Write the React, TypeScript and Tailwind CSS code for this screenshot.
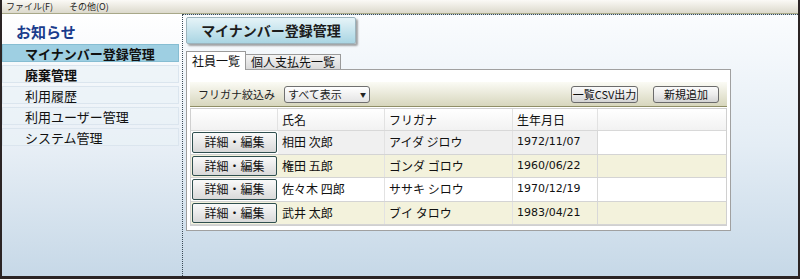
import React from 'react';

const jp = "font-['Noto_Sans_CJK_JP',sans-serif]";

const menuItems = [
  { label: 'マイナンバー登録管理', active: true, bold: true },
  { label: '廃棄管理', bold: true },
  { label: '利用履歴' },
  { label: '利用ユーザー管理' },
  { label: 'システム管理' },
];

const rows = [
  { name: '相田 次郎', kana: 'アイダ ジロウ', birth: '1972/11/07' },
  { name: '権田 五郎', kana: 'ゴンダ ゴロウ', birth: '1960/06/22' },
  { name: '佐々木 四郎', kana: 'ササキ シロウ', birth: '1970/12/19' },
  { name: '武井 太郎', kana: 'ブイ タロウ', birth: '1983/04/21' },
];

function SmallButton({ children, className = '' }: { children: React.ReactNode; className?: string }) {
  return (
    <button
      className={`h-[17px] rounded-[3px] border border-[#6b6b6b] bg-gradient-to-b from-[#fbfbfb] via-[#ececec] to-[#d4d4d4] text-[11px] leading-[15px] text-[#111] ${className}`}
    >
      {children}
    </button>
  );
}

export default function App() {
  return (
    <div className={`w-[800px] h-[279px] flex flex-col overflow-hidden bg-[#2b2424] px-[2px] pb-[3px] ${jp}`}>
      {/* menu bar */}
      <div className="h-[14px] shrink-0 flex items-center gap-[16px] px-[4px] bg-gradient-to-b from-[#fbfaf6] to-[#dcd9cc] border-b border-[#a8a888] text-[9px] leading-none text-[#222]">
        <span>ファイル(F)</span>
        <span>その他(O)</span>
      </div>

      <div className="flex flex-1 min-h-0">
        {/* sidebar */}
        <div className="w-[180px] shrink-0 bg-gradient-to-b from-[#ffffff] via-[#e8eff6] to-[#c6d8e7] pt-[7px]">
          <div className="h-[22px] pl-[14px] text-[15px] font-bold leading-[22px] text-[#1a3c8c]">お知らせ</div>
          <div className="flex flex-col gap-[3px] pr-[3px] mt-[1px]">
            {menuItems.map((m) => (
              <div
                key={m.label}
                className={`h-[18px] pl-[22px] text-[13px] leading-[18px] text-[#111] border ${
                  m.active ? 'bg-[#9ecfe2] border-[#86bdd2]' : 'bg-[#eaf1f7]/60 border-[#dbe5ee]'
                } ${m.bold ? 'font-bold' : ''}`}
              >
                {m.label}
              </div>
            ))}
          </div>
        </div>

        {/* main */}
        <div className="flex-1 flex flex-col border-l border-dotted border-[#3a4a55] border-t bg-gradient-to-b from-[#fafcfe] via-[#e4edf5] to-[#c6d8e7] pl-[3px] pt-[2px]">
          <div className="w-[170px] h-[27px] flex items-center justify-center rounded-[2px] border border-[#9cb4bd] bg-gradient-to-b from-[#e6f4f8] to-[#a9d5e3] shadow-[2px_2px_2px_rgba(0,0,0,0.35)] text-[14px] font-bold text-[#1c1c1c]">
            マイナンバー登録管理
          </div>

          <div className="flex items-end mt-[7px] h-[19px] text-[12px] leading-none">
            <div className="h-[19px] px-[5px] flex items-center bg-white border border-[#9a9a9a] border-b-0 text-[#111] z-10">
              社員一覧
            </div>
            <div className="h-[16px] px-[5px] flex items-center bg-gradient-to-b from-[#f4f4f4] to-[#d9d9d9] border border-[#9a9a9a] border-l-0 text-[#111]">
              個人支払先一覧
            </div>
          </div>

          <div className="w-[545px] h-[162px] -mt-px bg-white border border-[#a0a0a0] px-[3px] pt-[12px]">
            <div className="h-[25px] flex items-center bg-gradient-to-b from-[#fbfbf5] to-[#d7d6bd] border-b border-[#8f8e66] px-[8px] text-[11px] text-[#222]">
              <span>フリガナ絞込み</span>
              <div className="ml-[9px] w-[86px] h-[17px] flex items-center justify-between rounded-[3px] border border-[#707070] bg-gradient-to-b from-white to-[#e4e4e4] px-[3px]">
                <span>すべて表示</span>
                <span className="text-[6px]">▼</span>
              </div>
              <SmallButton className="ml-auto w-[67px]">一覧CSV出力</SmallButton>
              <SmallButton className="ml-[15px] w-[66px]">新規追加</SmallButton>
            </div>

            <div className="mt-[1px] border border-[#d0d0d0]">
              <div className="flex h-[22px] border-b border-[#d8d8d8] bg-gradient-to-b from-white to-[#f2f2f2] text-[12px] leading-[22px] text-[#111]">
                <div className="w-[87px] border-r border-[#e2e2e2]" />
                <div className="w-[107px] pl-[4px] border-r border-[#e2e2e2]">氏名</div>
                <div className="w-[128px] pl-[4px] border-r border-[#e2e2e2]">フリガナ</div>
                <div className="w-[85px] pl-[4px] border-r border-[#e2e2e2]">生年月日</div>
                <div className="flex-1" />
              </div>
              {rows.map((r, i) => (
                <div
                  key={r.name}
                  className={`flex h-[23.5px] items-center border-b border-[#d4d4d4] text-[12px] text-[#111] ${
                    i % 2 === 1 ? 'bg-[#f3f2dc]' : 'bg-white'
                  }`}
                >
                  <div className="w-[87px] h-full p-[1px]">
                    <button className="w-full h-full rounded-[2px] border border-[#2f4f4f] bg-gradient-to-b from-[#fafafa] to-[#d9d9d9] text-[12px]">
                      詳細・編集
                    </button>
                  </div>
                  <div className={`w-[107px] h-full leading-[22px] pl-[4px] border-r border-[#e2e2e2] ${i === 0 ? 'bg-[#f0f0f0]' : ''}`}>{r.name}</div>
                  <div className={`w-[128px] h-full leading-[22px] pl-[4px] border-r border-[#e2e2e2] ${i === 0 ? 'bg-[#f0f0f0]' : ''}`}>{r.kana}</div>
                  <div className={`w-[85px] h-full leading-[22px] pl-[4px] border-r border-[#d8d8d8] font-['DejaVu_Sans',sans-serif] text-[11px] ${i === 0 ? 'bg-[#f0f0f0]' : ''}`}>{r.birth}</div>
                  <div className="flex-1" />
                </div>
              ))}
            </div>
          </div>
        </div>
      </div>
    </div>
  );
}
